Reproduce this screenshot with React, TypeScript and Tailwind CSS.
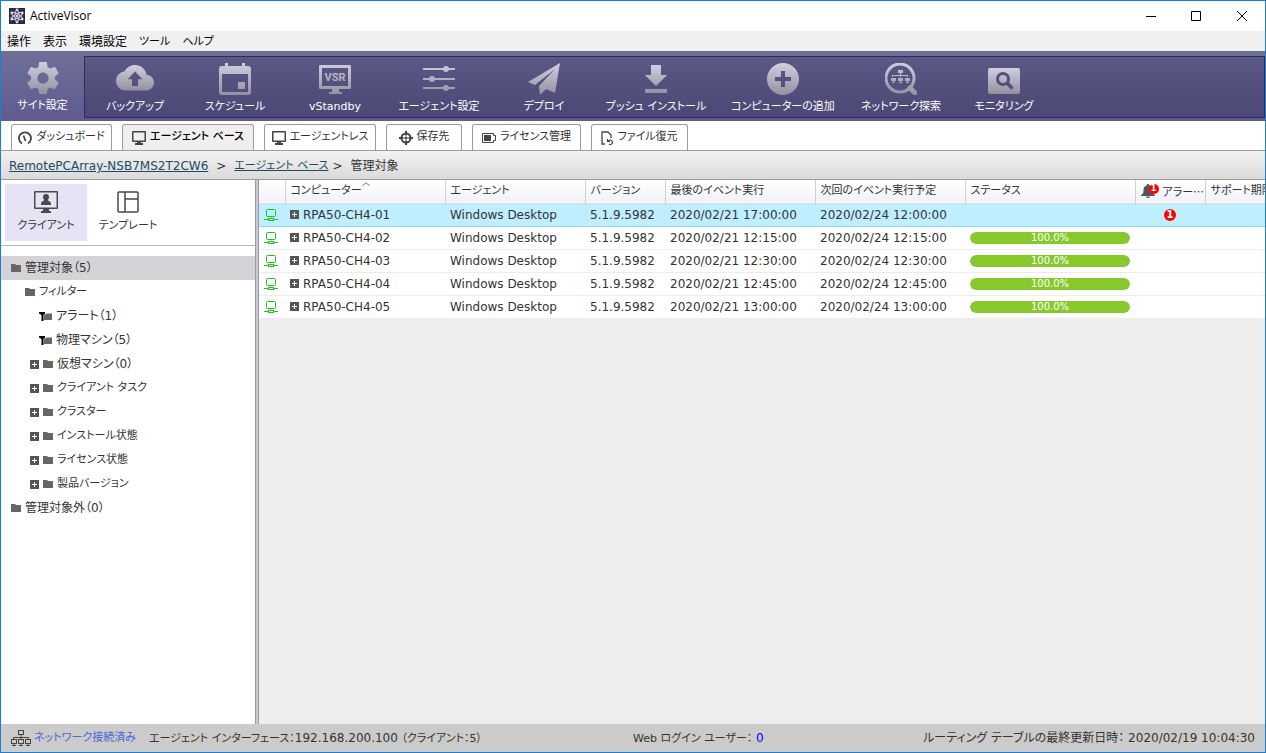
import type { ReactNode } from "react";

type ToolItem = { label: string; width: string; icon: ReactNode };
type Tab = { label: string; width: string; icon: ReactNode; active?: boolean };
type TreeNode = {
  label: string;
  indent: string;
  kind: "folder" | "filter" | "expandable";
  selected?: boolean;
  small?: boolean;
};
type Client = {
  name: string;
  agent: string;
  version: string;
  lastRun: string;
  nextRun: string;
  progress: number | null;
  alerts: number;
};

const METAL = "url(#metal)";
const METAL_BOX = "url(#metal-box)";

function Gradients() {
  return (
    <svg className="absolute size-0" aria-hidden="true">
      <defs>
        <linearGradient id="metal" gradientUnits="userSpaceOnUse" x1="0" y1="0" x2="0" y2="32">
          <stop offset="0" stopColor="#d0cfe0" />
          <stop offset="1" stopColor="#93919f" />
        </linearGradient>
        <linearGradient id="metal-box" x1="0" y1="0" x2="0" y2="1">
          <stop offset="0" stopColor="#d0cfe0" />
          <stop offset="1" stopColor="#93919f" />
        </linearGradient>
      </defs>
    </svg>
  );
}

function LogoIcon() {
  return (
    <svg width="16" height="16" viewBox="0 0 16 16" aria-hidden="true">
      <rect width="16" height="16" fill="#2b2a48" />
      <g fill="none" stroke="#d9d9e6" strokeWidth="0.9">
        <ellipse cx="8" cy="8" rx="2.2" ry="6" />
        <ellipse cx="8" cy="8" rx="2.2" ry="6" transform="rotate(60 8 8)" />
        <ellipse cx="8" cy="8" rx="2.2" ry="6" transform="rotate(120 8 8)" />
      </g>
      <g fill="#d9d9e6">
        <circle cx="8" cy="8" r="1.2" />
        <circle cx="8" cy="2" r="1.4" />
        <circle cx="8" cy="14" r="1.4" />
        <circle cx="2.8" cy="5" r="1.4" />
        <circle cx="13.2" cy="5" r="1.4" />
        <circle cx="2.8" cy="11" r="1.4" />
        <circle cx="13.2" cy="11" r="1.4" />
      </g>
    </svg>
  );
}

function GearIcon() {
  return (
    <svg width="32" height="32" viewBox="2 2 20 20" aria-hidden="true">
      <path
        fill={METAL_BOX}
        d="M19.43 12.98c.04-.32.07-.64.07-.98s-.03-.66-.07-.98l2.11-1.65c.19-.15.24-.42.12-.64l-2-3.46c-.12-.22-.39-.3-.61-.22l-2.49 1c-.52-.4-1.08-.73-1.69-.98l-.38-2.65C14.46 2.18 14.25 2 14 2h-4c-.25 0-.46.18-.49.42l-.38 2.65c-.61.25-1.17.59-1.69.98l-2.49-1c-.23-.09-.49 0-.61.22l-2 3.46c-.13.22-.07.49.12.64l2.11 1.65c-.04.32-.07.65-.07.98s.03.66.07.98l-2.11 1.65c-.19.15-.24.42-.12.64l2 3.46c.12.22.39.3.61.22l2.49-1c.52.4 1.08.73 1.69.98l.38 2.65c.03.24.24.42.49.42h4c.25 0 .46-.18.49-.42l.38-2.65c.61-.25 1.17-.59 1.69-.98l2.49 1c.23.09.49 0 .61-.22l2-3.46c.12-.22.07-.49-.12-.64l-2.11-1.65zM12 15.5c-1.93 0-3.5-1.57-3.5-3.5s1.57-3.5 3.5-3.5 3.5 1.57 3.5 3.5-1.57 3.5-3.5 3.5z"
      />
    </svg>
  );
}

function CloudIcon() {
  return (
    <svg width="38" height="32" viewBox="0 2.7 24 20.2" aria-hidden="true">
      <path
        fill={METAL_BOX}
        fillRule="evenodd"
        d="M19.35 10.04C18.67 6.59 15.64 4 12 4 9.11 4 6.6 5.64 5.35 8.04 2.34 8.36 0 10.91 0 14c0 3.31 2.69 6 6 6h13c2.76 0 5-2.24 5-5 0-2.64-2.05-4.78-4.65-4.96zM12 8l4.6 5h-2.7v4.2h-3.8V13H7.4z"
      />
    </svg>
  );
}

function CalendarIcon() {
  return (
    <svg width="32" height="32" viewBox="0 0 32 32" aria-hidden="true">
      <path
        fill={METAL_BOX}
        fillRule="evenodd"
        d="M6 0h3v3h14V0h3v3h3a3 3 0 0 1 3 3v23a3 3 0 0 1-3 3H3a3 3 0 0 1-3-3V6a3 3 0 0 1 3-3h3zM3 11v18h26V11zM19 19h7v7h-7z"
      />
    </svg>
  );
}

function VsrIcon() {
  return (
    <svg width="32" height="32" viewBox="0 0 32 32" aria-hidden="true">
      <path
        fill={METAL}
        fillRule="evenodd"
        d="M1 2h30a1 1 0 0 1 1 1v22a1 1 0 0 1-1 1H20v3h3v2H10v-2h3v-3H1a1 1 0 0 1-1-1V3a1 1 0 0 1 1-1zM3 5v18h26V5z"
      />
      <text
        x="16"
        y="18"
        textAnchor="middle"
        fontSize="11"
        fontWeight="700"
        fontFamily="'Liberation Sans Narrow', Roboto, sans-serif"
        fill={METAL}
      >
        VSR
      </text>
    </svg>
  );
}

function SlidersIcon() {
  return (
    <svg width="32" height="32" viewBox="0 0 32 32" aria-hidden="true">
      <g fill={METAL}>
        <rect x="0" y="5" width="32" height="2" />
        <circle cx="23" cy="6" r="3" />
        <rect x="0" y="15" width="32" height="2" />
        <circle cx="9" cy="16" r="3" />
        <rect x="0" y="24" width="32" height="2" />
        <circle cx="23" cy="25" r="3" />
      </g>
    </svg>
  );
}

function PlaneIcon() {
  return (
    <svg width="32" height="32" viewBox="0 0 32 32" aria-hidden="true">
      <path fill={METAL_BOX} d="M32 0 27 30l-9-4-6 6-1-9L27 6 7 22l-7-3z" />
    </svg>
  );
}

function DownloadIcon() {
  return (
    <svg width="32" height="32" viewBox="0 0 32 32" aria-hidden="true">
      <path fill={METAL_BOX} d="M11 2h10v10h6L16 23 5 12h6zM5 26h22v4H5z" />
    </svg>
  );
}

function AddIcon() {
  return (
    <svg width="32" height="32" viewBox="0 0 32 32" aria-hidden="true">
      <path
        fill={METAL_BOX}
        fillRule="evenodd"
        d="M16 0a16 16 0 1 1 0 32 16 16 0 0 1 0-32zM14 8v6H8v4h6v6h4v-6h6v-4h-6V8z"
      />
    </svg>
  );
}

function DiscoverIcon() {
  return (
    <svg width="32" height="32" viewBox="0 0 32 32" aria-hidden="true">
      <circle cx="15" cy="15" r="14" fill="none" stroke={METAL} strokeWidth="3" />
      <path d="m25 25 5 5" stroke={METAL} strokeWidth="5" strokeLinecap="round" />
      <g fill={METAL}>
        <path d="M13 7h5v3h-2v2h7v2h-1v-1h-6v1h-1v-1H8v1H7v-2h8v-2h-2z" />
        <path d="M6 15h5v3H9v1h1v1H7v-1h1v-1H6zM13 15h5v3h-2v1h1v1h-3v-1h1v-1h-2zM20 15h5v3h-2v1h1v1h-3v-1h1v-1h-2z" />
      </g>
    </svg>
  );
}

function MonitoringIcon() {
  return (
    <svg width="32" height="32" viewBox="0 0 32 32" aria-hidden="true">
      <rect x="0" y="5" width="32" height="26" rx="2" fill={METAL_BOX} />
      <circle cx="15" cy="16" r="5.5" fill="none" stroke="#524f7e" strokeWidth="3" />
      <path d="m19 20 5.500 5.500" stroke="#524f7e" strokeWidth="3.500" />
    </svg>
  );
}

function GaugeIcon() {
  return (
    <svg width="14" height="14" viewBox="0 0 14 14" fill="none" stroke="#444" aria-hidden="true">
      <path d="M4 12.500A6 6 0 1 1 10 12.500" strokeWidth="1.800" />
      <path d="M5.500 4.500 7.500 10" strokeWidth="1.800" />
    </svg>
  );
}

function MonitorIcon() {
  return (
    <svg width="14" height="14" viewBox="0 0 14 14" aria-hidden="true">
      <path
        fill="#444"
        fillRule="evenodd"
        d="M1 0h12a1 1 0 0 1 1 1v9a1 1 0 0 1-1 1H9v1h2v2H3v-2h2v-1H1a1 1 0 0 1-1-1V1a1 1 0 0 1 1-1zM1.500 1.500v8h11v-8z"
      />
    </svg>
  );
}

function TargetIcon() {
  return (
    <svg width="14" height="14" viewBox="0 0 14 14" fill="none" stroke="#444" aria-hidden="true">
      <circle cx="7" cy="7" r="4.500" strokeWidth="2" />
      <circle cx="7" cy="7" r="1.600" fill="#444" stroke="none" />
      <path d="M7 0v4.500M7 9.500V14M0 7h4.500M9.500 7H14" strokeWidth="2" />
    </svg>
  );
}

function BatteryIcon() {
  return (
    <svg width="14" height="10" viewBox="0 0 14 10" aria-hidden="true">
      <path d="M.5.5h11v2h2v5h-2v2H.5z" fill="none" stroke="#444" />
      <rect x="2" y="2" width="7" height="6" fill="#444" />
    </svg>
  );
}

function RestoreFileIcon() {
  return (
    <svg width="12" height="14" viewBox="0 0 12 14" fill="none" stroke="#444" aria-hidden="true">
      <path d="M4 13H1V1h6l3 3v3" strokeWidth="1.300" />
      <path d="M6.500 8v2.500H9M7 10.500a2.300 2.300 0 1 1 1 2.800" strokeWidth="1.200" />
    </svg>
  );
}

function ClientIcon() {
  return (
    <svg width="24" height="22" viewBox="0 0 24 22" aria-hidden="true">
      <path
        fill="#4a4a4a"
        fillRule="evenodd"
        d="M1 0h22a1 1 0 0 1 1 1v16a1 1 0 0 1-1 1h-8v2h2v2H7v-2h2v-2H1a1 1 0 0 1-1-1V1a1 1 0 0 1 1-1zM1.500 1.500v15h21v-15z"
      />
      <path fill="#4a4a4a" d="M12 3a3 3 0 0 1 3 3c0 1.500-.7 2.500-1.300 3 .3 1 3.300 1 3.300 4v1H7v-1c0-3 3-3 3.300-4C9.700 8.500 9 7.500 9 6a3 3 0 0 1 3-3z" />
    </svg>
  );
}

function TemplateIcon() {
  return (
    <svg width="22" height="22" viewBox="0 0 22 22" fill="none" stroke="#4a4a4a" aria-hidden="true">
      <rect x="1" y="1" width="20" height="20" rx="1" strokeWidth="1.500" />
      <path d="M8 1v20M8 8h13" strokeWidth="1.500" />
    </svg>
  );
}

function FolderIcon() {
  return (
    <svg width="10" height="8" viewBox="0 0 10 8" className="shrink-0" aria-hidden="true">
      <path d="M0 0h4l1 1h5v7H0z" fill="#666" />
    </svg>
  );
}

function FilterFolderIcon() {
  return (
    <svg width="13" height="9" viewBox="0 0 13 9" className="shrink-0" aria-hidden="true">
      <path d="M5 3 8 1.500h5V8H5z" fill="#666" />
      <path d="M0 0h6v1.500L4.500 3v6h-2V3L0 1.500z" fill="#000" />
    </svg>
  );
}

function PlusBox() {
  return (
    <svg width="9" height="9" viewBox="0 0 9 9" className="block shrink-0" aria-hidden="true">
      <rect width="9" height="9" fill="#555" />
      <path d="M4 2h1v2h2v1H5v2H4V5H2V4h2z" fill="#fff" />
    </svg>
  );
}

function OnlineIcon() {
  return (
    <svg width="14" height="12" viewBox="0 0 14 12" fill="none" stroke="#1fc41f" className="block" aria-hidden="true">
      <rect x="2.500" y=".5" width="9" height="7" rx="1" />
      <path d="M7 7.500v1M0 10.500h4.500M9.500 10.500H14" />
      <rect x="4.500" y="9.500" width="5" height="2" />
    </svg>
  );
}

function BellIcon() {
  return (
    <svg width="14" height="14" viewBox="0 0 14 14" className="shrink-0" aria-hidden="true">
      <path fill="#555" d="M7 0c.8 0 1.200.5 1.200 1.200C10.500 1.800 11.500 3.500 11.500 6c0 3 .5 4 2.500 5v1H0v-1c2-1 2.500-2 2.500-5 0-2.500 1-4.200 3.300-4.800C5.800.5 6.200 0 7 0zM5 12.500h4a2 1.500 0 0 1-4 0z" />
    </svg>
  );
}

function NetworkIcon() {
  return (
    <svg width="20" height="17" viewBox="0 0 20 17" fill="none" stroke="#444" aria-hidden="true">
      <rect x="7.500" y=".5" width="5" height="4" />
      <path d="M10 4.500v5M2.500 9.500v-2h15v2" />
      <rect x=".5" y="9.500" width="5" height="4" />
      <rect x="7.500" y="9.500" width="5" height="4" />
      <rect x="14.500" y="9.500" width="5" height="4" />
      <path d="M1 15.500h4M8 15.500h4M15 15.500h4M3 13.500v2M10 13.500v2M17 13.500v2" />
    </svg>
  );
}

const menus = ["操作", "表示", "環境設定", "ツール", "ヘルプ"];

const tools: ToolItem[] = [
  { label: "バックアップ", width: "w-[100px]", icon: <CloudIcon /> },
  { label: "スケジュール", width: "w-[100px]", icon: <CalendarIcon /> },
  { label: "vStandby", width: "w-[100px]", icon: <VsrIcon /> },
  { label: "エージェント設定", width: "w-[108px]", icon: <SlidersIcon /> },
  { label: "デプロイ", width: "w-[102px]", icon: <PlaneIcon /> },
  { label: "プッシュ インストール", width: "w-[122px]", icon: <DownloadIcon /> },
  { label: "コンピューターの追加", width: "w-[132px]", icon: <AddIcon /> },
  { label: "ネットワーク探索", width: "w-[104px]", icon: <DiscoverIcon /> },
  { label: "モニタリング", width: "w-[102px]", icon: <MonitoringIcon /> },
];

const tabs: Tab[] = [
  { label: "ダッシュボード", width: "w-[101px]", icon: <GaugeIcon /> },
  { label: "エージェント ベース", width: "w-[132px]", icon: <MonitorIcon />, active: true },
  { label: "エージェントレス", width: "w-[112px]", icon: <MonitorIcon /> },
  { label: "保存先", width: "w-[76px]", icon: <TargetIcon /> },
  { label: "ライセンス管理", width: "w-[109px]", icon: <BatteryIcon /> },
  { label: "ファイル復元", width: "w-[97px]", icon: <RestoreFileIcon /> },
];

const tree: TreeNode[] = [
  { label: "管理対象（5）", indent: "pl-[10px]", kind: "folder", selected: true },
  { label: "フィルター", indent: "pl-[24px]", kind: "folder", small: true },
  { label: "アラート（1）", indent: "pl-[38px]", kind: "filter" },
  { label: "物理マシン（5）", indent: "pl-[38px]", kind: "filter" },
  { label: "仮想マシン（0）", indent: "pl-[29px]", kind: "expandable" },
  { label: "クライアント タスク", indent: "pl-[29px]", kind: "expandable", small: true },
  { label: "クラスター", indent: "pl-[29px]", kind: "expandable", small: true },
  { label: "インストール状態", indent: "pl-[29px]", kind: "expandable", small: true },
  { label: "ライセンス状態", indent: "pl-[29px]", kind: "expandable", small: true },
  { label: "製品バージョン", indent: "pl-[29px]", kind: "expandable", small: true },
  { label: "管理対象外（0）", indent: "pl-[10px]", kind: "folder" },
];

const clients: Client[] = [
  { name: "RPA50-CH4-01", agent: "Windows Desktop", version: "5.1.9.5982", lastRun: "2020/02/21 17:00:00", nextRun: "2020/02/24 12:00:00", progress: null, alerts: 1 },
  { name: "RPA50-CH4-02", agent: "Windows Desktop", version: "5.1.9.5982", lastRun: "2020/02/21 12:15:00", nextRun: "2020/02/24 12:15:00", progress: 100, alerts: 0 },
  { name: "RPA50-CH4-03", agent: "Windows Desktop", version: "5.1.9.5982", lastRun: "2020/02/21 12:30:00", nextRun: "2020/02/24 12:30:00", progress: 100, alerts: 0 },
  { name: "RPA50-CH4-04", agent: "Windows Desktop", version: "5.1.9.5982", lastRun: "2020/02/21 12:45:00", nextRun: "2020/02/24 12:45:00", progress: 100, alerts: 0 },
  { name: "RPA50-CH4-05", agent: "Windows Desktop", version: "5.1.9.5982", lastRun: "2020/02/21 13:00:00", nextRun: "2020/02/24 13:00:00", progress: 100, alerts: 0 },
];

function TitleBar() {
  return (
    <header className="flex h-[30px] items-center bg-white pl-2">
      <LogoIcon />
      <h1 className="ml-[5px] font-['Open_Sans','Noto_Sans',sans-serif] text-xs text-black">ActiveVisor</h1>
      <div className="ml-auto flex h-full">
        <button aria-label="最小化" className="flex w-[45px] items-center justify-center">
          <svg width="10" height="10" viewBox="0 0 10 10" stroke="#000"><path d="M0 5.500h10" /></svg>
        </button>
        <button aria-label="最大化" className="flex w-[45px] items-center justify-center">
          <svg width="10" height="10" viewBox="0 0 10 10" stroke="#000" fill="none"><path d="M.5.5h9v9h-9z" /></svg>
        </button>
        <button aria-label="閉じる" className="flex w-[47px] items-center justify-center">
          <svg width="10" height="10" viewBox="0 0 10 10" stroke="#000"><path d="m0 0 10 10M10 0 0 10" /></svg>
        </button>
      </div>
    </header>
  );
}

function Toolbar() {
  return (
    <div className="flex h-[70px] bg-linear-to-b from-[#6f7099] to-[#5e5b90] text-[11px] text-white">
      <button className="flex w-[83px] shrink-0 flex-col items-center pt-[11px]">
        <GearIcon />
        <span className="mt-[3px] leading-[18px]">サイト設定</span>
      </button>
      <div className="mt-[5px] mb-[3px] flex min-w-0 flex-1 overflow-hidden border border-[#302c57] bg-linear-to-b from-[#5b5886] to-[#4c4875]">
        {tools.map((t) => (
          <button key={t.label} className={`flex shrink-0 flex-col items-center pt-[6px] whitespace-nowrap ${t.width}`}>
            {t.icon}
            <span className="mt-[3px] leading-[18px]">{t.label}</span>
          </button>
        ))}
      </div>
    </div>
  );
}

function Tabs() {
  return (
    <div role="tablist" className="flex h-[30px] items-end gap-[10px] border-b border-[#9c9c9c] bg-white pl-[10px] text-[11px]">
      {tabs.map((t) => (
        <button
          key={t.label}
          role="tab"
          aria-selected={!!t.active}
          className={`flex h-[26px] shrink-0 items-center justify-center gap-1 rounded-t-[3px] border border-b-0 border-[#9c9c9c] whitespace-nowrap ${t.width} ${
            t.active ? "bg-[#efefef] font-medium text-black" : "bg-white"
          }`}
        >
          {t.icon}
          {t.label}
        </button>
      ))}
    </div>
  );
}

function Sidebar() {
  return (
    <aside className="flex w-[255px] shrink-0 flex-col border-r border-[#9c9c9c] bg-white">
      <div className="flex h-[66px] border-b border-[#b8b8b8] px-1 pt-1 text-[11px]">
        <button className="flex h-[57px] w-[82px] flex-col items-center bg-[#e6e3f5] pt-[7px]">
          <ClientIcon />
          <span className="mt-1 leading-[18px]">クライアント</span>
        </button>
        <button className="flex h-[57px] w-[82px] flex-col items-center pt-[7px]">
          <TemplateIcon />
          <span className="mt-1 leading-[18px]">テンプレート</span>
        </button>
      </div>
      <ul className="mt-[10px]">
        {tree.map((n) => (
          <li key={n.label} className={`flex h-6 items-center gap-1 ${n.indent} ${n.selected ? "bg-[#d4d3d8]" : ""}`}>
            {n.kind === "expandable" && (
              <button aria-label={`${n.label}を展開`}>
                <PlusBox />
              </button>
            )}
            {n.kind === "filter" ? <FilterFolderIcon /> : <FolderIcon />}
            <span className={n.small ? "text-[11px]" : ""}>{n.label}</span>
          </li>
        ))}
      </ul>
    </aside>
  );
}

function ClientTable() {
  const th = "overflow-hidden border-r border-[#d0d0d0] px-[5px] text-left font-normal whitespace-nowrap";
  const td = "overflow-hidden px-[5px] whitespace-nowrap";

  return (
    <table className="w-full table-fixed border-collapse">
      <colgroup>
        <col className="w-[26px]" />
        <col className="w-[160px]" />
        <col className="w-[140px]" />
        <col className="w-[80px]" />
        <col className="w-[150px]" />
        <col className="w-[150px]" />
        <col className="w-[170px]" />
        <col className="w-[70px]" />
        <col />
      </colgroup>
      <thead>
        <tr className="h-[23px] border-b border-[#d8d8d8] bg-linear-to-b from-white to-[#f3f1f9] text-[11px]">
          <th className={th} aria-label="接続" />
          <th className={th} aria-sort="ascending">
            <div className="relative">
              コンピューター
              <svg width="8" height="4" viewBox="0 0 8 4" className="absolute -top-[2px] left-[71px]" fill="none" stroke="#777" aria-hidden="true">
                <path d="M.5 3.500 4 .8l3.500 2.700" />
              </svg>
            </div>
          </th>
          <th className={th}>エージェント</th>
          <th className={th}>バージョン</th>
          <th className={th}>最後のイベント実行</th>
          <th className={th}>次回のイベント実行予定</th>
          <th className={th}>ステータス</th>
          <th className={th}>
            <div className="relative flex items-center gap-2">
              <BellIcon />
              <span className="absolute top-0 left-[8px] flex size-[10px] items-center justify-center rounded-full bg-[#f00] text-[8px] leading-none font-bold text-white">
                1
              </span>
              <span className="font-['Noto_Sans_CJK_JP',sans-serif]">アラー…</span>
            </div>
          </th>
          <th className="overflow-hidden px-[5px] text-left font-normal whitespace-nowrap">サポート期限</th>
        </tr>
      </thead>
      <tbody>
        {clients.map((c, i) => (
          <tr
            key={c.name}
            className={`h-[23px] border-b ${i === 0 ? "border-t border-[#8adcf8] bg-[#bfeeff]" : "border-[#ececec] bg-white"}`}
          >
            <td className="pl-[5px]">
              <OnlineIcon />
            </td>
            <td className={td}>
              <div className="flex items-center gap-1">
                <button aria-label={`${c.name}を展開`}>
                  <PlusBox />
                </button>
                {c.name}
              </div>
            </td>
            <td className={td}>{c.agent}</td>
            <td className={td}>{c.version}</td>
            <td className={td}>{c.lastRun}</td>
            <td className={td}>{c.nextRun}</td>
            <td className={td}>
              {c.progress !== null && (
                <div className="h-3 overflow-hidden rounded-full bg-[#e4e4e4]">
                  <div
                    className="h-full rounded-full bg-[#87c92c] text-center text-[10px] leading-3 text-white"
                    style={{ width: `${c.progress}%` }}
                  >
                    {c.progress.toFixed(1)}%
                  </div>
                </div>
              )}
            </td>
            <td className="text-center leading-none">
              {c.alerts > 0 && (
                <span className="inline-flex size-3 items-center justify-center rounded-full bg-[#f00] text-[10px] leading-none font-bold text-white">
                  {c.alerts}
                </span>
              )}
            </td>
            <td />
          </tr>
        ))}
      </tbody>
    </table>
  );
}

function StatusBar() {
  return (
    <footer className="flex h-7 items-center bg-[#cbcbcb] text-[11px] whitespace-nowrap">
      <div className="flex flex-1 items-center pl-[10px]">
        <NetworkIcon />
        <a href="#network" className="ml-[3px] w-[115px] text-[#4a67d6]">ネットワーク接続済み</a>
        <span>
          エージェント インターフェース：<span className="text-xs">192.168.200.100</span> （クライアント：5）
        </span>
      </div>
      <div className="flex flex-1 items-center justify-between pr-[10px]">
        <span>
          Web ログイン ユーザー： <span className="text-xs text-[#00f]">0</span>
        </span>
        <span className="text-xs">ルーティング テーブルの最終更新日時： 2020/02/19 10:04:30</span>
      </div>
    </footer>
  );
}

export default function App() {
  return (
    <div className="flex min-h-screen flex-col border border-[#1a7fd4] bg-white font-['DejaVu_Sans','Noto_Sans_CJK_JP',sans-serif] text-xs text-[#333] [font-feature-settings:'palt']">
      <Gradients />
      <TitleBar />
      <nav className="flex h-5 items-center gap-3 bg-[#f0f0f0] pt-[2px] pl-[6px] text-black">
        {menus.map((m) => (
          <button key={m} className={/^[ァ-ー]+$/.test(m) ? "text-[11px]" : ""}>
            {m}
          </button>
        ))}
      </nav>
      <Toolbar />
      <Tabs />
      <nav className="flex h-[29px] items-center gap-2 border-b border-[#9c9c9c] bg-linear-to-b from-[#f3f3f3] to-[#dadada] pt-[2px] pl-2">
        <a href="#site" className="text-[#1d4a63] underline">RemotePCArray-NSB7MS2T2CW6</a>
        <span>&gt;</span>
        <a href="#agents" className="text-[11px] text-[#1d4a63] underline">エージェント ベース</a>
        <span className="-ml-1">&gt;</span>
        <span>管理対象</span>
      </nav>
      <div className="flex flex-1">
        <Sidebar />
        <div className="w-[3px] shrink-0 border-r border-[#9c9c9c] bg-[#c9c6d8]" />
        <main className="min-w-0 flex-1 overflow-hidden bg-[#eee]">
          <ClientTable />
        </main>
      </div>
      <StatusBar />
    </div>
  );
}
